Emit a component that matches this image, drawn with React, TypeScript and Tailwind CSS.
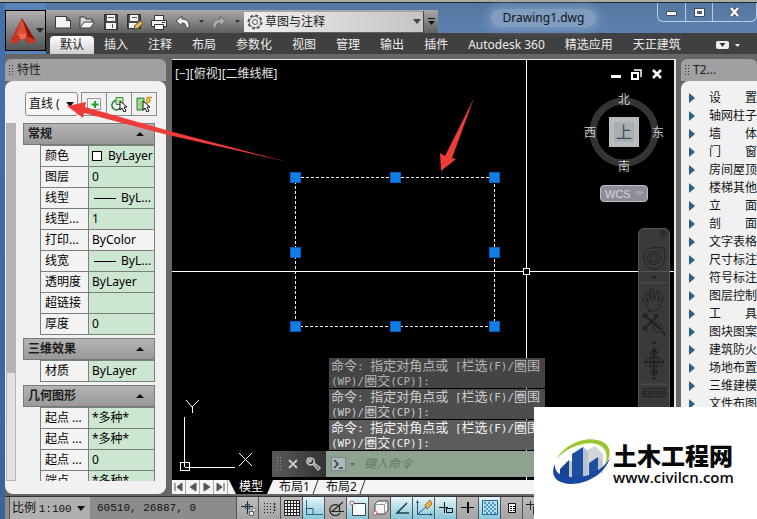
import React from "react";

const SANS = "font-['Noto_Sans','Noto_Sans_CJK_SC',sans-serif]";

const ribbonTabs = ["默认", "插入", "注释", "布局", "参数化", "视图", "管理", "输出", "插件", "Autodesk 360", "精选应用", "天正建筑"];

type Prop = { label: string; value: string; kind?: "swatch" | "line" | "plain" };

const groups: { title: string; rows: Prop[] }[] = [
  {
    title: "常规",
    rows: [
      { label: "颜色", value: "ByLayer", kind: "swatch" },
      { label: "图层", value: "0" },
      { label: "线型", value: "ByL...", kind: "line" },
      { label: "线型...", value: "1" },
      { label: "打印...", value: "ByColor", kind: "plain" },
      { label: "线宽", value: "ByL...", kind: "line" },
      { label: "透明度", value: "ByLayer" },
      { label: "超链接", value: "" },
      { label: "厚度", value: "0" },
    ],
  },
  { title: "三维效果", rows: [{ label: "材质", value: "ByLayer" }] },
  {
    title: "几何图形",
    rows: [
      { label: "起点 ...", value: "*多种*" },
      { label: "起点 ...", value: "*多种*" },
      { label: "起点 ...", value: "0" },
      { label: "端点 ...", value: "*多种*" },
    ],
  },
];

const screenMenu = [
  ["设", "置"], ["轴网柱子"], ["墙", "体"], ["门", "窗"], ["房间屋顶"], ["楼梯其他"], ["立", "面"], ["剖", "面"],
  ["文字表格"], ["尺寸标注"], ["符号标注"], ["图层控制"], ["工", "具"], ["图块图案"], ["建筑防火"], ["场地布置"],
  ["三维建模"], ["文件布图"],
];

function Icon({ w = 16, h = 16, children }: { w?: number; h?: number; children: React.ReactNode }) {
  return (
    <svg width={w} height={h} viewBox={`0 0 ${w} ${h}`} fill="none" className="block shrink-0" aria-hidden="true">
      {children}
    </svg>
  );
}

function Caret({ color = "#222" }: { color?: string }) {
  return (
    <Icon w={8} h={5}>
      <path d="M0 0h8L4 5z" fill={color} />
    </Icon>
  );
}

const quickAccess: { name: string; icon: React.ReactNode }[] = [
  { name: "新建", icon: <path d="M.5 2.500h11l4 4v7.500h-15z M11.500 2.500v4h4" fill="#f2f2f2" stroke="#3c3c3c" /> },
  {
    name: "打开",
    icon: (
      <>
        <path d="M1 14V3h5l1 2h6v3" fill="#d8d8d8" stroke="#3c3c3c" />
        <path d="M1 14l4-6h10.500l-4 6z" fill="#f4f4f4" stroke="#3c3c3c" />
      </>
    ),
  },
  {
    name: "保存",
    icon: (
      <>
        <path d="M1.500.5h13v15h-13z" fill="#4a4a4a" stroke="#303030" />
        <path d="M4 1h8v6H4zM3 9h10v6H3z" fill="#f4f4f4" />
        <path d="M5 3.500h6M9.500 10v4" stroke="#555" />
      </>
    ),
  },
  {
    name: "另存为",
    icon: (
      <>
        <path d="M.5.5h13v14H.5z" fill="#4a4a4a" stroke="#303030" />
        <path d="M3 1h8v6H3zM2 9h10v5H2z" fill="#f4f4f4" />
        <path d="M5 3.500h5" stroke="#555" />
        <path d="M7 15.500l1-4 5-5 3 3-5 5z" fill="#e6b75a" stroke="#4f3a1a" />
      </>
    ),
  },
  {
    name: "打印",
    icon: (
      <>
        <path d="M3.500 1.500h9v5h-9z" fill="#fff" stroke="#333" />
        <path d="M.5 6.500h15v6H.5z" fill="#f0f0f0" stroke="#333" />
        <path d="M3.500 10.500h9v5h-9z" fill="#fff" stroke="#333" />
        <path d="M11 8.500h3" stroke="#333" />
      </>
    ),
  },
];

function AppButton() {
  return (
    <button aria-label="应用程序菜单" className="flex h-[41px] w-[41px] shrink-0 items-center justify-between border border-black bg-linear-to-b from-[#b0b0b0] to-[#555] pr-[2px] pl-1">
      <Icon w={26} h={30}>
        <path d="M12 2L1 24v3l7 0 2-4h5l2 4h8v-3z" fill="#a61e10" />
        <path d="M12 2L8 20l-6 3z" fill="#c93a26" />
        <path d="M12 2l5 18 8 4z" fill="#8e1409" />
        <path d="M12 2l-5 16h10z" fill="#d9503a" />
        <path d="M8 18h9l-2 5h-5z" fill="#f06a4c" />
        <path d="M1 24l7-4 2 3-3 4H1zM25 24l-8-4-2 3 3 4h7z" fill="#cc3722" />
      </Icon>
      <Caret color="#2a2a2a" />
    </button>
  );
}

function TitleBar() {
  return (
    <div className="flex h-[30px] items-stretch">
      <div className="flex h-[23px] items-center self-end bg-linear-to-b from-[#a8a8a8] via-[#858585] to-[#5f5f5f] pl-[9px]">
        <div className="flex gap-2">
          {quickAccess.map((q) => (
            <button key={q.name} aria-label={q.name}>
              <Icon>{q.icon}</Icon>
            </button>
          ))}
        </div>
        <button aria-label="放弃" className="ml-2">
          <Icon><path d="M1 7l6-5v3c5 0 8 3 7 9h-3c0-3-1-5-4-5v3z" fill="#eee" stroke="#444" /></Icon>
        </button>
        <span className="ml-2"><Icon w={5} h={3}><path d="M0 0h5L2.500 3z" fill="#333" /></Icon></span>
        <button aria-label="重做" className="ml-[7px]">
          <Icon><path d="M15 7L9 2v3C4 5 1 8 2 14h3c0-3 1-5 4-5v3z" fill="#aaa" stroke="#666" /></Icon>
        </button>
        <span className="mr-[4px] ml-2"><Icon w={5} h={3}><path d="M0 0h5L2.500 3z" fill="#333" /></Icon></span>
        <div className="relative flex h-5 items-center bg-linear-to-r from-[#f0f0f0] to-[#c4c4c4]">
          <span className="pointer-events-none absolute left-[3px]">
            <Icon>
              <circle cx="8" cy="8" r="6.500" stroke="#555" strokeWidth="2" strokeDasharray="3 2" />
              <circle cx="8" cy="8" r="5.500" fill="#f2f2f2" stroke="#777" />
              <circle cx="8" cy="8" r="2.500" stroke="#555" />
            </Icon>
          </span>
          <select aria-label="工作空间" className="h-5 w-[179px] appearance-none pl-[21px] text-[12px] text-[#222]">
            <option>草图与注释</option>
          </select>
          <span className="pointer-events-none absolute right-[2px]"><Caret color="#444" /></span>
        </div>
        <button aria-label="自定义快速访问工具栏" className="flex h-[22px] w-[15px] items-center justify-center border-l border-[#444]">
          <Icon w={7} h={7}><path d="M0 0h7v1H0zM0 3h7L3.500 7z" fill="#111" /></Icon>
        </button>
      </div>
      <h1 className="flex flex-1 items-center justify-center pr-2 text-[12px] text-[#101820]">
        <span className="rounded-full bg-[#91a9c9]/70 px-3 leading-[18px] shadow-[0_0_8px_4px_rgba(145,169,201,0.500)]">Drawing1.dwg</span>
      </h1>
      <div className="flex h-[19px] rounded-b-md border border-t-0 border-[#b9c9df]">
        <button aria-label="最小化" className="flex w-[28px] items-center justify-center border-r border-[#b9c9df]">
          <Icon w={11} h={8}><path d="M.5 3.500h10v4H.5z" fill="#fff" stroke="#444c5c" /></Icon>
        </button>
        <button aria-label="最大化" className="flex w-[27px] items-center justify-center border-r border-[#b9c9df]">
          <Icon w={11} h={9}><path d="M2 2h7v5H2z" stroke="#fff" strokeWidth="2.500" /><path d="M.5.5h10v8H.5zM3.500 3.500h4v2h-4z" stroke="#444c5c" /></Icon>
        </button>
        <button aria-label="关闭" className="flex w-[43px] items-center justify-center">
          <Icon w={11} h={10}><path d="M2 1l7 8M9 1L2 9" stroke="#444c5c" strokeWidth="4" /><path d="M2 1l7 8M9 1L2 9" stroke="#fff" strokeWidth="2.500" /></Icon>
        </button>
      </div>
    </div>
  );
}

function RibbonTabs() {
  return (
    <nav className="flex h-[21px] items-end bg-[#404040] pl-1 text-[12px] whitespace-nowrap text-[#ededed]">
      {ribbonTabs.map((t, i) => (
        <button key={t} className={i === 0 ? "h-[18px] rounded-t-sm bg-linear-to-b from-white to-[#cfcfcf] px-[10px] leading-[18px] text-[#222]" : "h-[18px] px-[10px] leading-[18px]"}>
          {t}
        </button>
      ))}
      <button aria-label="功能区显示" className="ml-[25px] flex h-[18px] items-center gap-[6px]">
        <Icon w={13} h={8}><rect width="13" height="8" rx="2" fill="#eee" /><path d="M3.500 2h6l-3 4z" fill="#333" /></Icon>
        <Icon w={5} h={3}><path d="M0 0h5L2.500 3z" fill="#eee" /></Icon>
      </button>
    </nav>
  );
}

function Grip() {
  return <span className="h-3 w-[5px] bg-[radial-gradient(#333_1px,transparent_1px)] bg-[length:3px_3px]" />;
}

function PaletteHeader({ title }: { title: string }) {
  return (
    <h2 className="flex h-[22px] shrink-0 items-center bg-[#a0a0a0] rounded-t-md pl-[3px] text-[12px] text-[#222]">
      <Grip />
      <span className="pl-1">{title}</span>
    </h2>
  );
}

function PropertyGroup({ title, rows }: { title: string; rows: Prop[] }) {
  return (
    <section className="mb-[3px]">
      <h3 className="flex h-[22px] items-center justify-between border border-[#7a7a7a] bg-linear-to-b from-[#b6b3b3] to-[#999] pr-[10px] pl-1 text-[12px] font-bold text-[#1c1c1c]">
        {title}
        <Icon w={8} h={4}><path d="M0 4h8L4 0z" fill="#111" /></Icon>
      </h3>
      <table className="ml-[17px] w-[115px] table-fixed border-collapse text-left text-[12px] leading-4">
        <tbody>
          {rows.map((r, i) => (
            <tr key={i} className="h-[21px]">
              <th scope="row" className="w-[48px] overflow-hidden border border-[#77827a] bg-[#f3f3f3] p-0 pl-1 font-normal whitespace-nowrap">{r.label}</th>
              <td className={r.kind === "plain" ? "border border-[#77827a] bg-[#f3f3f3] p-0 pl-[3px]" : "overflow-hidden border border-[#77827a] bg-[#cde6d1] p-0 pl-[3px]"}>
                <div className="flex items-center whitespace-nowrap">
                  {r.kind === "swatch" && <span className="mr-[6px] h-[10px] w-[10px] shrink-0 border border-black bg-white" />}
                  {r.kind === "line" && <span className="mr-[5px] ml-[2px] h-px w-[22px] shrink-0 bg-black" />}
                  {r.value}
                </div>
              </td>
            </tr>
          ))}
        </tbody>
      </table>
    </section>
  );
}

function PropertiesPalette() {
  const tool = "flex h-[24px] w-[26px] items-center justify-center border border-[#8a8a8a] -ml-px";
  return (
    <aside className="flex w-[161px] shrink-0 flex-col">
      <PaletteHeader title="特性" />
      <div className="flex min-h-0 flex-1 flex-col rounded-lg bg-[#f1f1f1]">
        <div className="flex h-[42px] shrink-0 items-center pt-1 pl-5">
          <div className="relative flex items-center">
            <select aria-label="对象类型" className="h-6 w-[53px] appearance-none rounded-[3px] border border-[#888] bg-[#f7f7f7] pl-[3px] text-[12px] text-[#111]">
              <option>直线 (</option>
            </select>
            <span className="pointer-events-none absolute right-1"><Caret color="#111" /></span>
          </div>
          <div className="ml-1 flex">
            <button aria-label="切换 PICKADD" className={tool}>
              <Icon><path d="M1.500 2.500h13v11h-13z" stroke="#444" strokeDasharray="1 1" /><path d="M9 5v7M5.500 8.500h7" stroke="#23a02a" strokeWidth="2" /></Icon>
            </button>
            <button aria-label="选择对象" className={tool}>
              <Icon><path d="M7 5a4.500 4.500 0 1 0 2 7" stroke="#2f7a3a" strokeWidth="1.500" /><path d="M5 1.500h7v7H5z" fill="#b9e6a8" stroke="#3d8c45" /><path d="M9 5v9l2-2 2 4 2-1-2-4h3z" fill="#fff" stroke="#111" /></Icon>
            </button>
            <button aria-label="快速选择" className={tool}>
              <Icon><path d="M1 2h7v12H1z" fill="#9ad68c" stroke="#2d7d38" /><path d="M11 1l5 0-3 3 2 1-5 3z" fill="#f2b52c" stroke="#98701a" strokeWidth=".5" /><path d="M7 5v9l2-2 2 4 2-1-2-4h3z" fill="#fff" stroke="#111" /></Icon>
            </button>
          </div>
        </div>
        <div className="mb-[13px] flex min-h-0 flex-1 overflow-hidden">
          <div className="flex w-[11px] shrink-0 flex-col bg-[#f0f0f0] pl-px">
            <div className="flex-[7_0_0] bg-[#b4b4b4]" />
            <div className="flex-[3_0_0] border border-[#b5b5b5] bg-[#e2e2e4]" />
          </div>
          <div className="ml-[7px] w-[132px]">
            {groups.map((g) => <PropertyGroup key={g.title} {...g} />)}
          </div>
        </div>
      </div>
    </aside>
  );
}

function MonoLine({ text }: { text: string }) {
  const parts = text.split(/([\x20-\x7e]+)/).filter(Boolean);
  return (
    <p className="flex h-[15px] items-baseline whitespace-pre">
      {parts.map((p, i) => (
        <span key={i} className={/^[\x20-\x7e]/.test(p) ? "font-['DejaVu_Sans_Mono',monospace] text-[11px]" : "text-[13px]"}>{p}</span>
      ))}
    </p>
  );
}

function CommandLine() {
  return (
    <div className="absolute bottom-[3px] left-[100px] w-[273px]">
      <div className="ml-[57px] flex w-[216px] flex-col gap-px leading-[15px]">
        {["text-[#b5b5b5] bg-[#444]", "text-[#cccccc] bg-[#4d4d4d]", "text-[#f2f2f2] bg-[#5c5c5c]"].map((tone) => (
          <div key={tone} className={`h-[30px] pl-[2px] ${tone}`}>
            <MonoLine text="命令: 指定对角点或 [栏选(F)/圈围" />
            <MonoLine text="(WP)/圈交(CP)]:" />
          </div>
        ))}
      </div>
      <div className="mt-px flex h-[26px]">
        <div className="flex w-[54px] items-center gap-[7px] bg-linear-to-r from-[#5a5a5a] to-[#333] pl-[4px]">
          <span className="h-4 w-[5px] bg-[radial-gradient(#999_1px,transparent_1px)] bg-[length:3px_3px]" />
          <button aria-label="关闭命令行"><Icon w={10} h={10}><path d="M1 1l8 8M9 1L1 9" stroke="#c8c8c8" strokeWidth="2" /></Icon></button>
          <button aria-label="自定义"><Icon w={16} h={16}><path d="M4 2c-3 1-3 6 1 7 1 0 2 0 3-1l5 6 2-2-6-5c1-3-1-5-3-5v3l-2 1z" fill="none" stroke="#c8c8c8" strokeWidth="1.500" /></Icon></button>
        </div>
        <label htmlFor="cmd" className="flex items-center gap-1 bg-[#8ea38f] pl-[5px]">
          <Icon w={15} h={14}><rect x=".5" y=".5" width="14" height="13" fill="#b2b9bd" stroke="#7c8a83" /><path d="M3 3l4 4-4 4M8 11h4" stroke="#333a50" strokeWidth="1.500" /></Icon>
          <Icon w={5} h={3}><path d="M0 0h5L2.500 3z" fill="#5c6c5e" /></Icon>
        </label>
        <input id="cmd" placeholder="键入命令" className="min-w-0 flex-1 bg-[#8ea38f] pl-[9px] text-[12px] text-[#222] italic placeholder:text-[#677868]" />
      </div>
    </div>
  );
}

const grips = [[295, 177], [395, 177], [494, 177], [295, 252], [494, 252], [295, 326], [395, 326], [494, 326]];

function ModelSpace() {
  return (
    <svg viewBox="172 60 504 420" className="absolute top-0 left-0 h-[420px] w-[504px]" fill="none" stroke="#fff" shapeRendering="crispEdges">
      <path d="M526.500 60v208M526.500 275v205M172 271.500h352M530 271.500h146" />
      <rect x="523.500" y="268.500" width="6" height="6" />
      <rect x="295.500" y="177.500" width="199" height="149" strokeDasharray="3 2" />
      {grips.map(([x, y]) => (
        <rect key={`${x}-${y}`} x={x - 4.500} y={y - 4.500} width="10" height="10" fill="#0d7fe6" stroke="#0a5cae" />
      ))}
      <path d="M184.500 417v50M185 467.500h50M180.500 462.500h9v8h-9z" />
      <path d="M186 400l6 7 7-7M192.500 407v6M239 453l13 13M252 453l-13 13" shapeRendering="auto" />
    </svg>
  );
}

function ViewCube() {
  return (
    <div className="absolute top-[33px] right-[10px] w-[80px] text-[12px] leading-[14px] text-[#c4c4c4]">
      <div className="relative h-[80px]">
        <svg viewBox="0 0 80 80" className="h-20 w-20" fill="none">
          <circle cx="40" cy="39" r="31" stroke="#343434" strokeWidth="7" />
          <rect x="25" y="24" width="30" height="30" fill="#b9bcbe" />
          <rect x="30" y="29" width="20" height="20" fill="#a9aeb2" />
        </svg>
        <span className="absolute top-0 left-[34px]">北</span>
        <span className="absolute top-[33px] left-0">西</span>
        <span className="absolute top-[33px] right-0">东</span>
        <span className="absolute top-[67px] left-[34px]">南</span>
        <span className="absolute top-[31px] left-[32px] text-[16px] leading-4 text-[#40505a]">上</span>
      </div>
      <button className="mt-[12px] ml-4 flex h-[17px] w-[48px] items-center gap-1 rounded border border-[#bfbfc8] bg-[#8d8d98] pl-[4px] font-['Liberation_Sans',sans-serif] text-[11px] text-[#d4d4da]">
        WCS
        <Icon w={9} h={5}><path d="M1 1h7L4.500 4z" stroke="#b8b8c2" /></Icon>
      </button>
    </div>
  );
}

function NavigationBar() {
  return (
    <div className="absolute top-[168px] right-[4px] bottom-0 w-8 rounded-t-md border border-[#555] bg-[#404040]/90">
      <svg viewBox="0 0 32 190" className="block w-full" fill="none" stroke="#202020">
        <circle cx="26" cy="5" r="3" /><path d="M24.500 3.500l3 3M27.500 3.500l-3 3" />
        <path d="M5 31c0-8 5-11 12-11h10v12c0 6-5 11-11 11s-11-6-11-12z" /><circle cx="16" cy="31" r="7" /><circle cx="16" cy="31" r="4" />
        <path d="M14 51h4l-2 2zM14 121h4l-2 2zM14 159h4l-2 2z" fill="#202020" />
        <path d="M2 57.500h28M2 165.500h28" stroke="#555" />
        <path d="M10 85l-6-9c-1-2 2-3 3-1l3 4-3-11c0-2 2-2 3 0l3 8-1-11c0-2 2-2 3 0l1 11 3-9c1-2 3-1 3 1l-2 10 4-5c1-2 3-1 2 1l-4 9c-1 3-7 5-12 5z" />
        <path d="M5 91l18 16M5 107l15-15M5 91v4M5 91h4M20 92h-4M5 107h4M5 107v-4" strokeWidth="2" /><circle cx="20" cy="105" r="5" /><path d="M24 109l4 4" strokeWidth="2" />
        <path d="M16 129v26M5 142h22M12 133l4-5 4 5M12 151l4 5 4-5" strokeWidth="2" /><ellipse cx="16" cy="142" rx="10" ry="5" /><ellipse cx="16" cy="142" rx="4" ry="9" />
        <path d="M4 170h24v9H4zM12 170v9M20 170v9M6 173h4v3H6zM14 173h4v3h-4zM22 173h4v3h-4z" />
      </svg>
    </div>
  );
}

function LayoutTabs() {
  return (
    <div className="flex h-[14px] shrink-0 items-stretch overflow-hidden bg-[#f4f4f4] text-[12px] leading-[14px] text-[#111]">
      {["M3 3v8M10 3v8L5 7z", "M10 3v8L4 7z", "M4 3v8l6-4z", "M10 3v8M3 3v8l5-4z"].map((d, i) => (
        <button key={d} aria-label={["第一个", "上一个", "下一个", "最后一个"][i]} className="w-[14px] border-r border-[#aaa]">
          <Icon w={13} h={14}><path d={d} fill="#555" stroke="#555" /></Icon>
        </button>
      ))}
      <button className="ml-px bg-black px-[10px] text-white [clip-path:polygon(0_0,100%_0,calc(100%-6px)_100%,7px_100%)]">模型</button>
      {["布局1", "布局2"].map((t) => (
        <button key={t} className="flex items-stretch pl-[6px]">
          {t}
          <Icon w={10} h={14}><path d="M8 0L3 14" stroke="#333" /></Icon>
        </button>
      ))}
    </div>
  );
}

function Viewport() {
  return (
    <main className="flex min-w-0 flex-1 flex-col border-t border-r-2 border-[#e8e8e8] bg-black">
      <div className="relative min-h-0 flex-1 overflow-hidden">
        <ModelSpace />
        <div className="relative flex items-center justify-between pt-[5px] pr-[12px] pl-[3px] text-[12px] leading-[18px] text-[#e4e4e4]">
          <span>[−][俯视][二维线框]</span>
          <div className="flex items-center gap-[10px]">
            <button aria-label="最小化视口"><Icon w={10} h={10}><path d="M0 6h10v3H0z" fill="#fff" /></Icon></button>
            <button aria-label="还原视口"><Icon w={11} h={11}><path d="M3 1h7v7" stroke="#fff" strokeWidth="1.500" /><path d="M1 4h6v6H1z" stroke="#fff" strokeWidth="2" /></Icon></button>
            <button aria-label="关闭视口"><Icon w={10} h={10}><path d="M1 1l8 8M9 1L1 9" stroke="#fff" strokeWidth="2.500" /></Icon></button>
          </div>
        </div>
        <ViewCube />
        <NavigationBar />
        <CommandLine />
      </div>
      <LayoutTabs />
    </main>
  );
}

function ScreenMenu() {
  return (
    <aside className="-ml-px flex w-[76px] shrink-0 flex-col">
      <PaletteHeader title="T2..." />
      <ul className="min-h-0 flex-1 overflow-hidden rounded-tl-lg bg-[#f1f1f1] pt-2 text-[12px] leading-[18px] text-[#151515]">
        {screenMenu.map((item) => (
          <li key={item.join("")} className="h-[18px]">
            <button className="flex h-[18px] w-full items-center pl-2">
              <Icon w={6} h={10}><path d="M0 0l6 5-6 5z" fill="#2c608c" /></Icon>
              <span className="ml-[14px] flex w-12 justify-between whitespace-nowrap">
                {item.map((c) => <span key={c}>{c}</span>)}
              </span>
            </button>
          </li>
        ))}
      </ul>
    </aside>
  );
}

const toggles: { name: string; on?: boolean; icon: React.ReactNode }[] = [
  { name: "推断约束", icon: <><path d="M8.500 1v13M2 6.500h12" stroke="#222" /><path d="M6.500 4.500h4v4h-4z" stroke="#25516b" /><circle cx="15" cy="10" r="2" fill="#eee" stroke="#777" /><path d="M10.500 11.500h4v4h-4z" fill="#eee" stroke="#476a86" /></> },
  { name: "捕捉模式", icon: <><path d="M3 3.500h8M3 6.500h8M3 9.500h8M3 12.500h11" stroke="#222" strokeDasharray="1 2" /><path d="M13.500 3v9" stroke="#222" strokeWidth="1.500" strokeDasharray="2 1" /></> },
  { name: "栅格显示", icon: <><path d="M1.500.5h15v15h-15z" fill="#f4f4f4" /><path d="M1.500.5h15v15h-15zM4.500 1v14M7.500 1v14M10.500 1v14M13.500 1v14M1 3.500h15M1 6.500h15M1 9.500h15M1 12.500h15" stroke="#222" /></> },
  { name: "正交模式", on: true, icon: <path d="M1.500 0v15M1 14.500h17M2 8.500h6v6" stroke="#28647a" /> },
  { name: "极轴追踪", icon: <path d="M16 2L5 11.500h12M12 6a5.500 5.500 0 1 0 1 7M12.500 5v7" stroke="#222" strokeWidth="1.200" /> },
  { name: "对象捕捉", on: true, icon: <><path d="M3.500 3.500h13v12h-13z" fill="#f4fbfd" stroke="#444" /><circle cx="3" cy="3" r="2" fill="#fff" stroke="#c45a4d" /></> },
  { name: "三维对象捕捉", icon: <><path d="M4 4l3-3h10v9l-3 4H4z" fill="#f4f4f4" stroke="#444" /><path d="M4 4.500h9.500V14M13.500 4.500l3-3" stroke="#999" /><circle cx="4" cy="13" r="2" fill="#fff" stroke="#d05045" /></> },
  { name: "对象捕捉追踪", on: true, icon: <path d="M14 3L4 13h12" stroke="#1d3d4b" strokeWidth="1.500" /> },
  { name: "动态 UCS", on: true, icon: <><path d="M2.500 1v13.500h14M3 14L13 5" stroke="#275678" /><path d="M1 3l1.500-3L4 3zM15 13l3 1.500-3 1.500z" fill="#275678" /><path d="M10 5l5-5 2 4-5 5z" fill="#f0b440" stroke="#9a7020" /></> },
  { name: "动态输入", on: true, icon: <path d="M7.500 2v11M2 7.500h9M9.500 8.500h6v4h-6z" stroke="#111" /> },
  { name: "线宽", icon: <><path d="M2 7.500h13" stroke="#111" /><path d="M9 2v11" stroke="#111" strokeWidth="2" /></> },
  { name: "透明度", on: true, icon: <><path d="M1.500.5h15v14h-15z" fill="#b6e1f2" stroke="#275f8c" /><path d="M3 3h12M3 7h12M3 11h12" stroke="#5897c0" strokeWidth="2" strokeDasharray="2 2" /><path d="M5 5h11M5 9h11M5 13h11" stroke="#5897c0" strokeWidth="2" strokeDasharray="2 2" /></> },
  { name: "快捷特性", icon: <><path d="M5.500 3.500h7v9h-7z" fill="#fff" stroke="#111" /><path d="M7 6.500h5M7 8.500h5M7 10.500h5" stroke="#111" strokeDasharray="2 1" /></> },
  { name: "选择循环", icon: <><path d="M5.500 1v9M1 4.500h9" stroke="#222" /><path d="M8.500 6.500h7v8h-7z" fill="#eee" stroke="#333" /><circle cx="14" cy="13" r="3" fill="#3b9b3b" /></> },
];

function StatusBar() {
  return (
    <footer className="flex h-[23px] shrink-0 items-stretch border-t border-[#333] bg-[#8c8c8c] pl-1 font-['Noto_Sans_CJK_SC',sans-serif] text-[12px] text-[#111]">
      <button className="flex w-[81px] items-center justify-between border-l border-[#555] bg-[#b0b0b0] pr-[5px] pl-[2px] whitespace-pre">
        <span>比例 <span className="font-['Liberation_Mono',monospace] text-[11px]">1:100</span></span>
        <Caret color="#111" />
      </button>
      <output className="w-[146px] pl-[7px] font-['Liberation_Mono',monospace] text-[11px] leading-[22px] whitespace-pre">60510, 26887, 0</output>
      {toggles.map((t) => (
        <button key={t.name} aria-label={t.name} aria-pressed={!!t.on} className={t.on ? "flex w-[22px] shrink-0 items-center justify-center border-l border-[#555] bg-linear-to-b from-[#e4f5f9] to-[#86c5da]" : "flex w-[22px] shrink-0 items-center justify-center border-l border-[#555] bg-linear-to-b from-[#bcbcbc] to-[#a4a4a4]"}>
          <Icon w={18} h={16}>{t.icon}</Icon>
        </button>
      ))}
    </footer>
  );
}

function Watermark() {
  return (
    <a href="#" className="absolute right-0 bottom-0 flex h-[112px] w-[223px] items-center bg-white pl-[19px] text-[#080808]">
      <svg width="60" height="50" viewBox="0 0 60 50" className="shrink-0" aria-hidden="true">
        <path d="M32 13l10-5 8 8v19H32z" fill="#d3d5d7" />
        <path d="M19 16l11-7v30H19z" fill="#1d4da0" />
        <path d="M30 9l5 4v26h-5z" fill="#b8c2d0" />
        <path d="M7 31l9-9v17H7z" fill="#194391" />
        <path d="M16 22l3 2v15h-3z" fill="#bdc5ce" />
        <path d="M36 25l9-6v18l-9 2z" fill="#1e4ea2" />
        <path d="M45 19l4 3v12l-4 3z" fill="#bdc5ce" />
        <path d="M4 21C11 6 35-4 50 4c9 5 8 15 2 23 3-9 2-16-6-20C34 2 14 9 4 21z" fill="#9bc62d" />
        <path d="M2 26c-6 13 3 20 16 20 17 0 34-11 39-26-7 12-22 20-36 19C10 39 1 36 2 26z" fill="#1747a0" />
      </svg>
      <span className="flex flex-col pt-1">
        <strong className="text-[24px] leading-[24px] font-black">土木工程网</strong>
        <span className="font-['Open_Sans','Noto_Sans',sans-serif] text-[15px] leading-[18px] font-semibold">www.civilcn.com</span>
      </span>
    </a>
  );
}

function Arrows() {
  return (
    <svg viewBox="0 0 757 519" className="pointer-events-none absolute top-0 left-0 h-[519px] w-[757px]" fill="#ee3d38">
      <path d="M67 106l19-4-1 5 88 25 115 30-120-27-84-22-1 5z" />
      <path d="M441 171l-1-18 5 3 29-58-22 60 4 1z" />
    </svg>
  );
}

export default function App() {
  return (
    <div className={`relative flex h-screen min-h-[519px] flex-col overflow-hidden bg-[#666] ${SANS}`}>
      <div className="h-[3px] shrink-0 border-b border-[#1e2a38] bg-[#a9aaa2]" />
      <div className="flex min-h-0 flex-1 bg-linear-to-b from-[#4470ac] to-[#3d6399] pl-[5px]">
        <div className="flex min-w-0 flex-1 flex-col bg-[#676767]">
          <header className="flex shrink-0 bg-[#404040]">
            <div className="bg-[#5a82b8] pt-[7px]"><AppButton /></div>
            <div className="min-w-0 flex-1 bg-linear-to-b from-[#54779f] via-[#5d81b0] to-[#45699c]">
              <TitleBar />
              <RibbonTabs />
            </div>
          </header>
          <div className="mt-[5px] flex min-h-0 flex-1 gap-[6px] pb-[2px]">
            <PropertiesPalette />
            <Viewport />
            <ScreenMenu />
          </div>
          <StatusBar />
        </div>
      </div>
      <Arrows />
      <Watermark />
    </div>
  );
}
